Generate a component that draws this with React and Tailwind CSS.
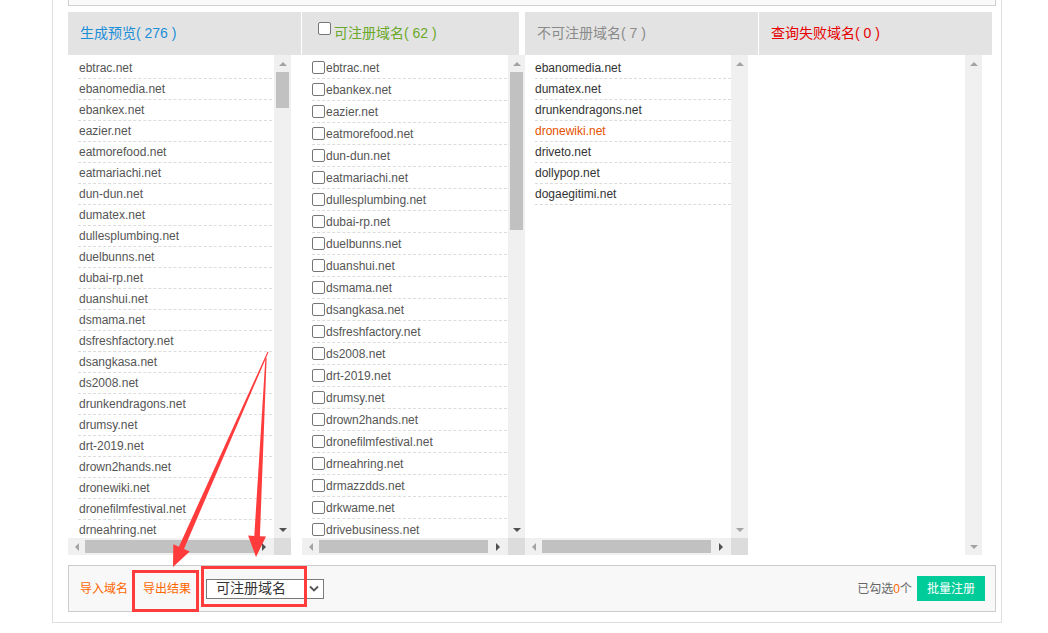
import React from "react"

const col1 = [
  "ebtrac.net", "ebanomedia.net", "ebankex.net", "eazier.net", "eatmorefood.net",
  "eatmariachi.net", "dun-dun.net", "dumatex.net", "dullesplumbing.net", "duelbunns.net",
  "dubai-rp.net", "duanshui.net", "dsmama.net", "dsfreshfactory.net", "dsangkasa.net",
  "ds2008.net", "drunkendragons.net", "drumsy.net", "drt-2019.net", "drown2hands.net",
  "dronewiki.net", "dronefilmfestival.net", "drneahring.net",
]

const col2 = [
  "ebtrac.net", "ebankex.net", "eazier.net", "eatmorefood.net", "dun-dun.net",
  "eatmariachi.net", "dullesplumbing.net", "dubai-rp.net", "duelbunns.net", "duanshui.net",
  "dsmama.net", "dsangkasa.net", "dsfreshfactory.net", "ds2008.net", "drt-2019.net",
  "drumsy.net", "drown2hands.net", "dronefilmfestival.net", "drneahring.net", "drmazzdds.net",
  "drkwame.net", "drivebusiness.net",
]

const col3 = [
  { name: "ebanomedia.net" },
  { name: "dumatex.net" },
  { name: "drunkendragons.net" },
  { name: "dronewiki.net", hot: true },
  { name: "driveto.net" },
  { name: "dollypop.net" },
  { name: "dogaegitimi.net" },
]

// little scrollbar triangles
function Tri({ dir, dark }) {
  const vert = dir === "up" || dir === "down"
  const pts = {
    up: "0,4 4,0 8,4",
    down: "0,0 8,0 4,4",
    left: "4,0 4,8 0,4",
    right: "0,0 0,8 4,4",
  }[dir]
  return (
    <svg width={vert ? 8 : 4} height={vert ? 4 : 8} viewBox={vert ? "0 0 8 4" : "0 0 4 8"}>
      <polygon points={pts} fill={dark ? "#505050" : "#a3a3a3"} />
    </svg>
  )
}

function VScroll({ thumb, downDark }) {
  return (
    <div className="w-[17px] shrink-0 bg-[#f0f0f0] flex flex-col items-center">
      <div className="h-[17px] w-full flex items-center justify-center">
        <Tri dir="up" />
      </div>
      {thumb && <div className={`w-[13px] bg-[#c1c1c1] ${thumb}`} />}
      <div className="flex-1" />
      <div className="h-[17px] w-full flex items-center justify-center">
        <Tri dir="down" dark={downDark} />
      </div>
    </div>
  )
}

function HScroll() {
  return (
    <div className="flex h-[17px] shrink-0">
      <div className="flex-1 bg-[#f0f0f0] flex items-center">
        <div className="w-[17px] flex justify-center">
          <Tri dir="left" />
        </div>
        <div className="h-[13px] w-[169px] bg-[#c1c1c1]" />
        <div className="flex-1 flex justify-center">
          <Tri dir="right" dark />
        </div>
      </div>
      <div className="w-[17px] bg-[#dcdcdc]" />
    </div>
  )
}

function Box() {
  return (
    <span className="block w-[13px] h-[13px] shrink-0 rounded-[2px] border border-[#767676] bg-white" />
  )
}

// tapered red arrow drawn as one polygon
function arrowPoints(x0, y0, tx, ty) {
  const dx = tx - x0
  const dy = ty - y0
  const len = Math.hypot(dx, dy)
  const ux = dx / len
  const uy = dy / len
  const nx = -uy
  const ny = ux
  const bx = tx - ux * 21
  const by = ty - uy * 21
  const p = (x, y, k) => `${(x + nx * k).toFixed(1)},${(y + ny * k).toFixed(1)}`
  return [
    p(x0, y0, 0.6),
    p(bx, by, 2.8),
    p(bx, by, 9),
    `${tx},${ty}`,
    p(bx, by, -9),
    p(bx, by, -2.8),
    p(x0, y0, -0.6),
  ].join(" ")
}

export default function App() {
  return (
    <div className="relative w-full h-[633px] overflow-hidden bg-white font-['Liberation_Sans','Noto_Sans_CJK_SC',sans-serif]">
      <div className="ml-[52px] w-[950px] border-x border-b border-[#dedede] pl-[15px] pb-[10px]">
        {/* box above, cut off by the top edge */}
        <div className="w-[928px] h-[6px] border-x border-b border-[#d0d0d0] bg-[#fafafa]" />

        {/* column titles */}
        <div className="mt-[6px] flex h-[43px] text-[14px]">
          <div className="w-[233px] bg-[#e3e3e3] flex items-center pl-[12px] text-[#1b8ed8]">
            生成预览( 276 )
          </div>
          <div className="w-[1px]" />
          <div className="w-[217px] bg-[#e3e3e3] flex items-center pl-[16px] text-[#6aa828]">
            <span className="mb-[10px] mr-[3px]">
              <Box />
            </span>
            可注册域名( 62 )
          </div>
          <div className="w-[6px]" />
          <div className="w-[233px] bg-[#e3e3e3] flex items-center pl-[12px] text-[#8a8a8a]">
            不可注册域名( 7 )
          </div>
          <div className="w-[1px]" />
          <div className="w-[233px] bg-[#e3e3e3] flex items-center pl-[12px] text-[#e60000]">
            查询失败域名( 0 )
          </div>
        </div>

        {/* lists */}
        <div className="flex h-[500px] text-[12px]">
          <div className="w-[223px] flex flex-col">
            <div className="flex flex-1 min-h-0">
              <div className="flex-1 overflow-hidden pt-[3px]">
                {col1.map((d) => (
                  <div
                    key={d}
                    className="ml-[10px] mr-[2px] h-[21px] border-b border-dashed border-[#dcdcdc] leading-[20px] pl-[1px] text-[#555]"
                  >
                    {d}
                  </div>
                ))}
              </div>
              <VScroll thumb="h-[36px]" downDark />
            </div>
            <HScroll />
          </div>

          <div className="w-[11px]" />

          <div className="w-[223px] flex flex-col">
            <div className="flex flex-1 min-h-0">
              <div className="flex-1 overflow-hidden pt-[2px]">
                {col2.map((d) => (
                  <div
                    key={d}
                    className="ml-[10px] mr-[1px] h-[22px] border-b border-dashed border-[#dcdcdc] flex items-center text-[#555]"
                  >
                    <Box />
                    <span className="ml-[1px]">{d}</span>
                  </div>
                ))}
              </div>
              <VScroll thumb="h-[158px]" downDark />
            </div>
            <HScroll />
          </div>

          <div className="w-[223px] flex flex-col">
            <div className="flex flex-1 min-h-0">
              <div className="flex-1 overflow-hidden pt-[3px]">
                {col3.map((d) => (
                  <div
                    key={d.name}
                    className={`ml-[10px] h-[21px] border-b border-dashed border-[#dcdcdc] leading-[20px] ${
                      d.hot ? "text-[#e65100]" : "text-[#333]"
                    }`}
                  >
                    {d.name}
                  </div>
                ))}
              </div>
              <VScroll />
            </div>
            <HScroll />
          </div>

          <div className="w-[234px] flex">
            <div className="flex-1" />
            <VScroll />
          </div>
        </div>

        {/* action bar */}
        <div className="mt-[10px] w-[928px] h-[47px] border border-[#cccccc] bg-[#f8f8f8] flex items-center pl-[11px] pr-[10px] text-[12px]">
          <span className="text-[#ff6600]">导入域名</span>
          <span className="ml-[15px] text-[#ff6600]">导出结果</span>
          <div className="ml-[15px] w-[118px] h-[20px] border border-[#7a7a7a] bg-white flex items-center pl-[9px] pr-[4px] text-[14px] text-[#333]">
            <span className="flex-1">可注册域名</span>
            <svg width="10" height="7" viewBox="0 0 10 7">
              <polyline points="1,1.5 5,5.5 9,1.5" fill="none" stroke="#555" strokeWidth="1.8" />
            </svg>
          </div>
          <div className="flex-1" />
          <span className="text-[#666]">
            已勾选<span className="text-[#ff6600]">0</span>个
          </span>
          <button className="ml-[5px] w-[68px] h-[25px] bg-[#00cc99] text-white text-[12px]">
            批量注册
          </button>
        </div>
      </div>

      {/* red annotation marks drawn over the page */}
      <svg className="absolute left-0 top-0 pointer-events-none" width="1048" height="633" viewBox="0 0 1048 633">
        <polygon points={arrowPoints(268, 352, 173, 567)} fill="#ff3b3b" />
        <polygon points={arrowPoints(266, 358, 256, 557)} fill="#ff3b3b" />
        <rect x="133.5" y="571.5" width="64" height="39" fill="none" stroke="#ff3b3b" strokeWidth="3" />
        <rect x="202.5" y="567.5" width="103" height="38" fill="none" stroke="#ff3b3b" strokeWidth="3" />
      </svg>
    </div>
  )
}
